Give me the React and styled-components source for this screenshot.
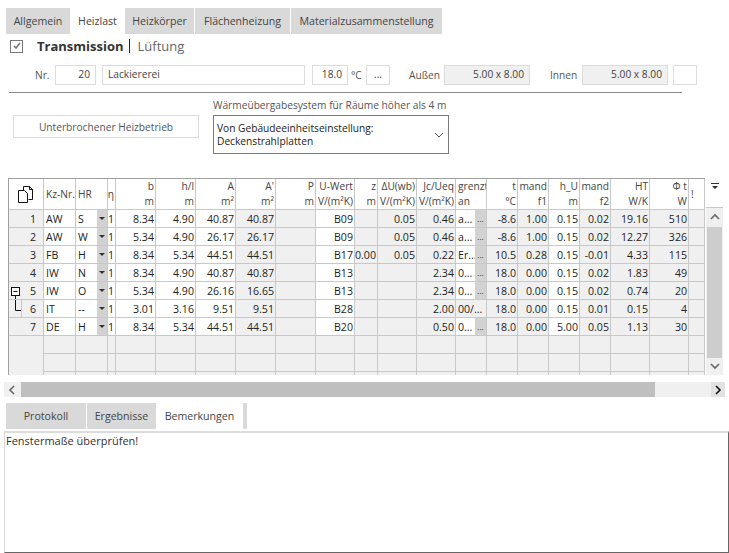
import React from "react";
import styled, { createGlobalStyle } from "styled-components";

const GlobalStyle = createGlobalStyle`
  html, body {
    margin: 0;
    padding: 0;
    background: #fff;
  }
  body {
    width: 729px;
    height: 553px;
    overflow: hidden;
    font-family: "Open Sans", "Liberation Sans", sans-serif;
    font-size: 10.2px;
    color: #333;
  }
`;

const Page = styled.div`
  width: 729px;
  height: 553px;
  display: flex;
  flex-direction: column;
  padding-top: 8px;
  box-sizing: border-box;
`;

const TabBar = styled.div`
  display: flex;
  gap: 1px;
  height: 26px;
  margin-left: 6px;
  margin-top: ${(p) => p.$top || 0}px;
`;

const Tab = styled.div`
  display: flex;
  align-items: center;
  justify-content: center;
  width: ${(p) => p.$w}px;
  background: ${(p) => (p.$active ? "#fff" : "#d9d9d9")};
  color: #444;
  font-size: 10.6px;
`;

const HeadRow = styled.div`
  display: flex;
  align-items: center;
  height: 24px;
  padding-left: 10px;
`;

const CheckBox = styled.span`
  width: 11px;
  height: 11px;
  border: 1px solid #777;
  display: flex;
  align-items: center;
  justify-content: center;
  margin-right: 14px;
`;

const StrongLabel = styled.span`
  font-weight: 700;
  color: #333;
  padding-right: 5px;
  border-right: 1px solid #222;
  line-height: 14px;
  font-size: 13px;
`;

const LightLabel = styled.span`
  color: #666;
  padding-left: 8px;
  font-size: 13px;
`;

const FieldRow = styled.div`
  display: flex;
  align-items: center;
  height: 20px;
  margin-top: 7px;
  padding-left: 35px;
`;

const FieldLabel = styled.span`
  color: #555;
  width: ${(p) => p.$w}px;
  margin-left: ${(p) => p.$ml || 0}px;
  flex: none;
`;

const Field = styled.div`
  width: ${(p) => p.$w}px;
  height: 20px;
  box-sizing: border-box;
  flex: none;
  border: 1px solid #dcdcdc;
  background: ${(p) => (p.$grey ? "#f0f0f0" : "#fff")};
  margin-left: ${(p) => p.$ml || 0}px;
  padding: 0 5px 2px;
  display: flex;
  align-items: center;
  justify-content: ${(p) => (p.$right ? "flex-end" : p.$center ? "center" : "flex-start")};
  color: #444;
`;

const Rule = styled.div`
  height: 1px;
  background: #8a8a8a;
  margin: 7px 47px 0 9px;
`;

const SystemRow = styled.div`
  display: flex;
  align-items: flex-start;
  height: 76px;
  box-sizing: border-box;
  padding: 5px 0 0 13px;
`;

const PlainButton = styled.div`
  width: 184px;
  height: 21px;
  margin-top: 17px;
  border: 1px solid #dcdcdc;
  display: flex;
  align-items: center;
  justify-content: center;
  color: #555;
`;

const SystemBlock = styled.div`
  margin-left: 14px;
  display: flex;
  flex-direction: column;
`;

const SystemLabel = styled.div`
  color: #555;
  height: 15px;
  line-height: 15px;
`;

const Select = styled.div`
  box-sizing: border-box;
  width: 236px;
  height: 39px;
  border: 1px solid #7a7a7a;
  padding: 4px 4px 4px 3px;
  display: flex;
  justify-content: space-between;
  align-items: center;
  line-height: 13px;
  color: #222;
  margin-top: 2px;
`;

const GridRow = styled.div`
  display: flex;
  height: 197px;
  margin-top: 9px;
`;

const Table = styled.div`
  margin-left: 8px;
  width: 697px;
  height: 197px;
  box-sizing: border-box;
  overflow: hidden;
  border-top: 1px solid #a0a0a0;
  border-left: 1px solid #a0a0a0;
  display: grid;
  grid-template-columns: 35px 32px 32px 8px 40px 40px 40px 40px 40px 39px 23px 39px 39px 31px 31px 31px 31px 31px 39px 39px 16px;
  grid-template-rows: 31px repeat(10, 18px);
  color: #222;
`;

const HeaderCell = styled.div`
  box-sizing: border-box;
  border-right: 1px solid #c8c8c8;
  border-bottom: 1px solid #c8c8c8;
  background: #fff;
  display: flex;
  flex-direction: column;
  justify-content: center;
  align-items: ${(p) => (p.$center ? "center" : p.$left ? "flex-start" : "flex-end")};
  padding: 0 ${(p) => (p.$left ? 0 : 1)}px 0 ${(p) => (p.$left ? 2 : 0)}px;
  line-height: 15px;
  font-size: 10.2px;
  color: #444;
  white-space: nowrap;
  overflow: hidden;
`;

const Cell = styled.div`
  box-sizing: border-box;
  position: relative;
  border-right: 1px solid #c8c8c8;
  border-bottom: ${(p) => (p.$noLine ? "0" : "1px solid #c8c8c8")};
  background: ${(p) => (p.$edit ? "#fff" : "#f0f0f0")};
  display: flex;
  align-items: center;
  justify-content: ${(p) => (p.$left ? "flex-start" : "flex-end")};
  padding: ${(p) => (p.$left ? "0 0 0 2px" : p.$number ? "0 7px 0 0" : "0 1px 0 0")};
  white-space: nowrap;
  overflow: hidden;
  font-size: 10.6px;
  color: #222;
`;

const CellButton = styled.span`
  position: absolute;
  top: 0;
  bottom: 0;
  right: 0;
  width: ${(p) => p.$w}px;
  background: #d2d2d2;
  display: flex;
  align-items: center;
  justify-content: center;
  font-size: 8px;
  line-height: 8px;
`;

const DownMark = styled.span`
  width: 0;
  height: 0;
  border-left: 3px solid transparent;
  border-right: 3px solid transparent;
  border-top: 3px solid #333;
`;

/* tree box and its line, these run over the row number cells */
const TreeMark = styled.svg`
  position: absolute;
  left: 2px;
  top: 0;
  z-index: 2;
`;

const VScroll = styled.div`
  width: 17px;
  margin-left: 1px;
  display: flex;
  flex-direction: column;
  align-items: stretch;
  background: #f0f0f0;
`;

const CornerButton = styled.div`
  height: 30px;
  background: #fff;
  border-bottom: 1px solid #c8c8c8;
  display: flex;
  justify-content: center;
  padding-top: 5px;
  box-sizing: border-box;
`;

const ArrowBox = styled.div`
  height: ${(p) => p.$h}px;
  display: flex;
  align-items: center;
  justify-content: center;
`;

const VThumb = styled.div`
  height: 131px;
  margin: 0 1px;
  background: #cdcdcd;
`;

const HScroll = styled.div`
  display: flex;
  height: 15px;
  margin: 7px 4px 0 4px;
  background: #f0f0f0;
`;

const HButton = styled.div`
  width: ${(p) => p.$w}px;
  flex: none;
  display: flex;
  align-items: center;
  justify-content: center;
  background: ${(p) => (p.$pressed ? "#e2e2e2" : "transparent")};
`;

const HThumb = styled.div`
  width: 634px;
  flex: none;
  background: #bfbfbf;
`;

const HTrack = styled.div`
  flex: 1;
`;

const Remarks = styled.div`
  flex: 1;
  margin: 2px 0 0 4px;
  padding: 0 0 0 1px;
  border-top: 2px solid #dcdcdc;
  border-left: 1px solid #dcdcdc;
  border-right: 1px solid #666;
  border-bottom: 1px solid #666;
  font-size: 11px;
  color: #333;
`;

const head = [
  [],
  ["Kz-Nr."],
  ["HR"],
  ["η"],
  ["b", "m"],
  ["h/l", "m"],
  ["A", "m²"],
  ["A'", "m²"],
  ["P", "m"],
  ["U-Wert", "V/(m²K)"],
  ["z", "m"],
  ["ΔU(wb)", "V/(m²K)"],
  ["Jc/Ueq", "V/(m²K)"],
  ["grenzt", "an"],
  ["t", "°C"],
  ["mand", "f1"],
  ["h_U", "m"],
  ["mand", "f2"],
  ["HT", "W/K"],
  ["Φ t", "W"],
  ["!"],
];

const rows = [
  ["1", "AW", "S", "1", "8.34", "4.90", "40.87", "40.87", "", "B09", "", "0.05", "0.46", "a...", "-8.6", "1.00", "0.15", "0.02", "19.16", "510", ""],
  ["2", "AW", "W", "1", "5.34", "4.90", "26.17", "26.17", "", "B09", "", "0.05", "0.46", "a...", "-8.6", "1.00", "0.15", "0.02", "12.27", "326", ""],
  ["3", "FB", "H", "1", "8.34", "5.34", "44.51", "44.51", "", "B17", "0.00", "0.05", "0.22", "Er...", "10.5", "0.28", "0.15", "-0.01", "4.33", "115", ""],
  ["4", "IW", "N", "1", "8.34", "4.90", "40.87", "40.87", "", "B13", "", "", "2.34", "0...", "18.0", "0.00", "0.15", "0.02", "1.83", "49", ""],
  ["5", "IW", "O", "1", "5.34", "4.90", "26.16", "16.65", "", "B13", "", "", "2.34", "0...", "18.0", "0.00", "0.15", "0.02", "0.74", "20", ""],
  ["6", "IT", "--", "1", "3.01", "3.16", "9.51", "9.51", "", "B28", "", "", "2.00", "00/...", "18.0", "0.00", "0.15", "0.01", "0.15", "4", ""],
  ["7", "DE", "H", "1", "8.34", "5.34", "44.51", "44.51", "", "B20", "", "", "0.50", "0...", "18.0", "0.00", "5.00", "0.05", "1.13", "30", ""],
];

const editColumns = [1, 2, 3, 4, 5, 6, 9, 13, 16];
const leftColumns = [1, 2, 13, 20];

function isEdit(row, col) {
  if (col === 13 && row === 5) return false;
  return editColumns.includes(col);
}

function CopyIcon() {
  return (
    <svg width="16" height="17" viewBox="0 0 16 17" fill="none" stroke="#111" strokeWidth="1">
      <path d="M5.5 4.5V.5h6l3 3v10h-4" />
      <path d="M.5 4.5h6l3 3v9h-9z" fill="#fff" />
      <path d="M11.5.5v3h3" />
    </svg>
  );
}

function Chevron({ dir, color = "#666" }) {
  const d = {
    up: "M1 6l4-4 4 4",
    down: "M1 2l4 4 4-4",
    left: "M6 1L2 5l4 4",
    right: "M3 1l4 4-4 4",
  }[dir];
  return (
    <svg width="10" height="10" viewBox="0 0 10 10" fill="none" stroke={color} strokeWidth="1.6">
      <path d={d} />
    </svg>
  );
}

export default function App() {
  return (
    <Page>
      <GlobalStyle />
      <TabBar>
        <Tab $w={64}>Allgemein</Tab>
        <Tab $w={53} $active>Heizlast</Tab>
        <Tab $w={69}>Heizkörper</Tab>
        <Tab $w={95}>Flächenheizung</Tab>
        <Tab $w={151}>Materialzusammenstellung</Tab>
      </TabBar>
      <HeadRow>
        <CheckBox>
          <svg width="8" height="8" viewBox="0 0 8 8" fill="none" stroke="#777" strokeWidth="1.6">
            <path d="M1 4l2 2 4-5" />
          </svg>
        </CheckBox>
        <StrongLabel>Transmission</StrongLabel>
        <LightLabel>Lüftung</LightLabel>
      </HeadRow>
      <FieldRow>
        <FieldLabel $w={20}>Nr.</FieldLabel>
        <Field $w={41} $right>20</Field>
        <Field $w={203} $ml={6}>Lackiererei</Field>
        <Field $w={36} $ml={7} $right>18.0</Field>
        <FieldLabel $w={15} $ml={3}>°C</FieldLabel>
        <Field $w={24} $center>...</Field>
        <FieldLabel $w={35} $ml={19}>Außen</FieldLabel>
        <Field $w={86} $grey $right>5.00 x 8.00</Field>
        <FieldLabel $w={31} $ml={20}>Innen</FieldLabel>
        <Field $w={86} $ml={1} $grey $right>5.00 x 8.00</Field>
        <Field $w={24} $ml={5} />
      </FieldRow>
      <Rule />
      <SystemRow>
        <PlainButton>Unterbrochener Heizbetrieb</PlainButton>
        <SystemBlock>
          <SystemLabel>Wärmeübergabesystem für Räume höher als 4 m</SystemLabel>
          <Select>
            <span>
              Von Gebäudeeinheitseinstellung:
              <br />
              Deckenstrahlplatten
            </span>
            <svg width="10" height="6" viewBox="0 0 10 6" fill="none" stroke="#555" strokeWidth="1">
              <path d="M1 1l4 4 4-4" />
            </svg>
          </Select>
        </SystemBlock>
      </SystemRow>
      <GridRow>
        <Table>
          {head.map((lines, i) => (
            <HeaderCell key={i} $left={leftColumns.includes(i)} $center={i === 0}>
              {i === 0 ? <CopyIcon /> : lines.map((l) => <span key={l}>{l}</span>)}
            </HeaderCell>
          ))}
          {rows.map((row, r) =>
            row.map((value, c) => (
              <Cell
                key={r + "-" + c}
                $edit={isEdit(r, c)}
                $left={leftColumns.includes(c)}
                $number={c === 0}
              >
                {value}
                {c === 0 && r === 4 && (
                  <TreeMark width="12" height="18" fill="none" stroke="#111" strokeWidth="1">
                    <rect x="0.5" y="5.5" width="8" height="8" fill="#fff" />
                    <path d="M2.5 9.5h4M4.5 13.5V18" />
                  </TreeMark>
                )}
                {c === 0 && r === 5 && (
                  <TreeMark width="12" height="18" fill="none" stroke="#111" strokeWidth="1">
                    <path d="M10.5 0V18" stroke="#c8c8c8" />
                    <path d="M4.5 0V10.5H10" />
                  </TreeMark>
                )}
                {c === 2 && (
                  <CellButton $w={10}>
                    <DownMark />
                  </CellButton>
                )}
                {c === 13 && r !== 5 && <CellButton $w={11}>...</CellButton>}
              </Cell>
            ))
          )}
          {[0, 1, 2].map((r) =>
            head.map((_, c) => <Cell key={"blank" + r + c} $noLine={c === 0} />)
          )}
        </Table>
        <VScroll>
          <CornerButton>
            <svg width="8" height="7" viewBox="0 0 8 7" fill="#333">
              <path d="M0 0h8v1H0zM1 3h6L4 6z" />
            </svg>
          </CornerButton>
          <ArrowBox $h={19}>
            <Chevron dir="up" />
          </ArrowBox>
          <VThumb />
          <ArrowBox $h={17}>
            <Chevron dir="down" />
          </ArrowBox>
        </VScroll>
      </GridRow>
      <HScroll>
        <HButton $w={17}>
          <Chevron dir="left" />
        </HButton>
        <HThumb />
        <HTrack />
        <HButton $w={14} $pressed>
          <Chevron dir="right" color="#111" />
        </HButton>
      </HScroll>
      <TabBar $top={6}>
        <Tab $w={80}>Protokoll</Tab>
        <Tab $w={69}>Ergebnisse</Tab>
        <Tab $w={85} $active>Bemerkungen</Tab>
        <Tab $w={4} />
      </TabBar>
      <Remarks>Fenstermaße überprüfen!</Remarks>
    </Page>
  );
}
